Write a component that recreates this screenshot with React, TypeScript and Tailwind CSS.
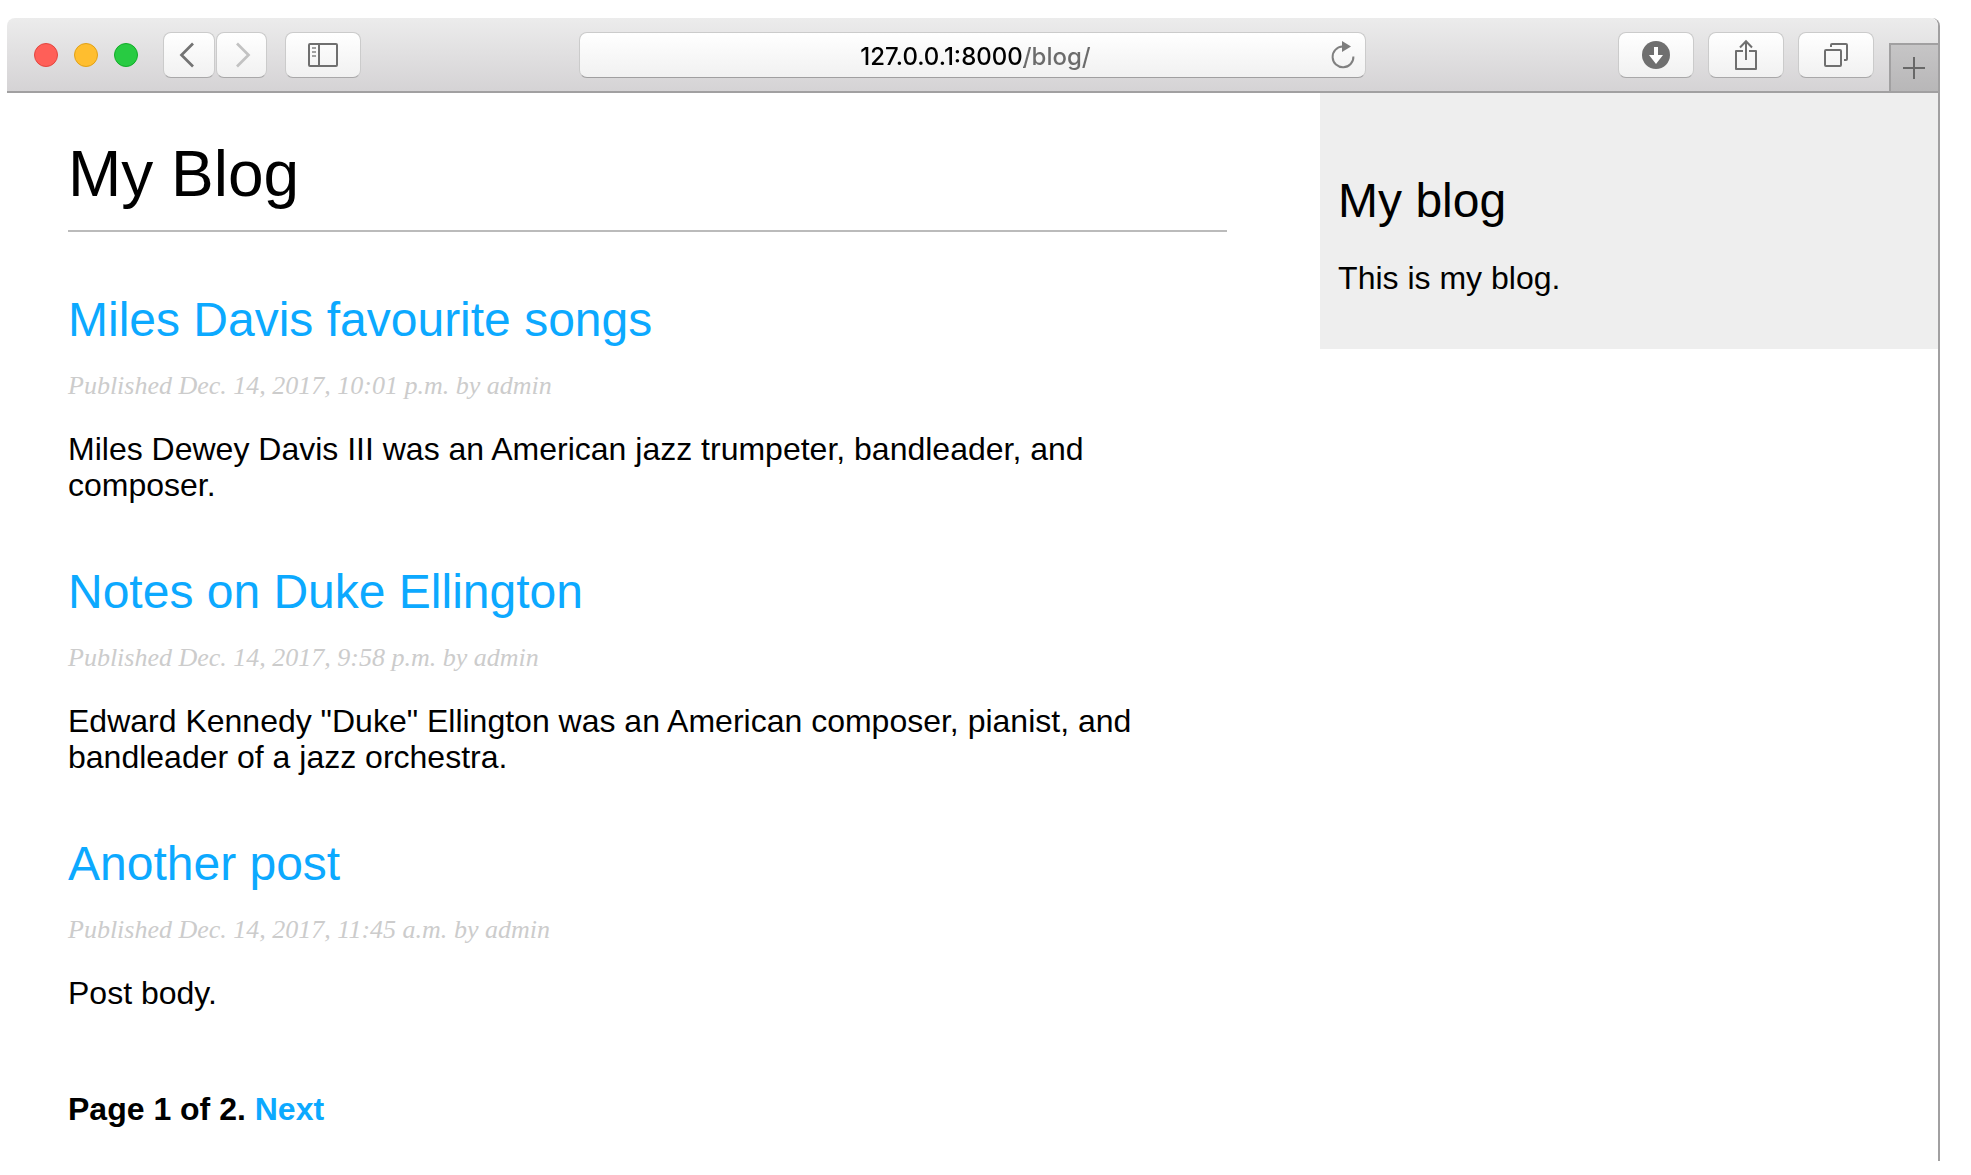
import React from "react";

type Post = { title: string; date: string; body: string };

const posts: Post[] = [
  {
    title: "Miles Davis favourite songs",
    date: "Dec. 14, 2017, 10:01 p.m.",
    body: "Miles Dewey Davis III was an American jazz trumpeter, bandleader, and composer.",
  },
  {
    title: "Notes on Duke Ellington",
    date: "Dec. 14, 2017, 9:58 p.m.",
    body: 'Edward Kennedy "Duke" Ellington was an American composer, pianist, and bandleader of a jazz orchestra.',
  },
  { title: "Another post", date: "Dec. 14, 2017, 11:45 a.m.", body: "Post body." },
];

function ToolButton({ label, size, children }: { label: string; size: string; children: React.ReactNode }) {
  return (
    <button
      type="button"
      aria-label={label}
      className={`${size} flex h-[46px] shrink-0 items-center justify-center rounded-lg border border-[#cbcbcb] border-b-[#a9a8a9] bg-linear-to-b from-white to-[#f1f1f1]`}
    >
      {children}
    </button>
  );
}

function Toolbar() {
  return (
    <header className="flex h-[75px] items-stretch rounded-t-lg border-b-2 border-[#a1a0a1] bg-linear-to-b from-[#ececec] to-[#d5d3d5]">
      <div className="flex flex-1 items-center">
        <div className="ml-[27px] flex gap-4">
          <button type="button" aria-label="Close" className="size-6 rounded-full border border-[#e2463f] bg-[#ff5f58]" />
          <button type="button" aria-label="Minimise" className="size-6 rounded-full border border-[#e1a116] bg-[#ffbe2f]" />
          <button type="button" aria-label="Zoom" className="size-6 rounded-full border border-[#12ac28] bg-[#28cb42]" />
        </div>
        <div className="ml-[25px] flex gap-px">
          <ToolButton label="Back" size="w-[52px] pr-1">
            <svg width="16" height="26" viewBox="0 0 16 26" fill="none" stroke="#737373" strokeWidth="2.7">
              <path d="M14 1.5 2.5 13 14 24.5" />
            </svg>
          </ToolButton>
          <ToolButton label="Forward" size="w-[51px] pl-[3px]">
            <svg width="16" height="26" viewBox="0 0 16 26" fill="none" stroke="#c2c2c2" strokeWidth="2.7">
              <path d="M2 1.5 13.5 13 2 24.5" />
            </svg>
          </ToolButton>
        </div>
        <div className="ml-[18px] flex">
          <ToolButton label="Show sidebar" size="w-[76px]">
            <svg width="30" height="24" viewBox="0 0 30 24" fill="none" stroke="#6f6f6f" strokeWidth="2">
              <rect x="1" y="1" width="28" height="22" rx="1" />
              <path d="M11 1v22" />
              <path d="M4 5h4M4 9h4M4 13h4" stroke="#a0a0a0" />
            </svg>
          </ToolButton>
        </div>
      </div>

      <div className="flex w-[40.8%] items-center">
        <div className="flex h-[46px] w-full items-center rounded-lg border border-[#cbcbcb] border-b-[#a09fa0] bg-linear-to-b from-white to-[#f1f1f1] pr-[10px] pl-10">
          <input
            type="text"
            aria-label="Address"
            defaultValue="127.0.0.1:8000/blog/"
            className="h-10 min-w-0 flex-1 bg-[linear-gradient(to_right,#000_calc(50%_+_49px),#6b6b6b_calc(50%_+_49px))] bg-clip-text pt-1 text-center font-['Inter',sans-serif] text-2xl font-medium text-transparent caret-black outline-none"
          />
          <button type="button" aria-label="Reload" className="shrink-0">
            <svg width="24" height="28" viewBox="0 0 24 28" fill="none">
              <path d="M11.5 5.5A10.4 10.4 0 1 0 22.4 15.5" stroke="#808080" strokeWidth="2" />
              <path d="M11 0 20 5.500 11 11Z" fill="#7d7d7d" />
            </svg>
          </button>
        </div>
      </div>

      <div className="flex flex-1 justify-end">
        <div className="flex items-center gap-[14px]">
          <ToolButton label="Downloads" size="w-[76px]">
            <svg width="28" height="28" viewBox="0 0 28 28">
              <circle cx="14" cy="14" r="14" fill="#6f6f6f" />
              <path d="M12 6h4v8h5l-7 9-7-9h5Z" fill="#fff" />
            </svg>
          </ToolButton>
          <ToolButton label="Share" size="w-[76px]">
            <svg width="22" height="34" viewBox="0 0 22 34" fill="none" stroke="#6f6f6f" strokeWidth="2">
              <path d="M8 13H1v18h20V13h-7" strokeLinejoin="round" />
              <path d="M11 22V3M5 9.500 11 3.200 17 9.500" />
            </svg>
          </ToolButton>
          <ToolButton label="Show all tabs" size="w-[76px]">
            <svg width="24" height="24" viewBox="0 0 24 24" fill="none" stroke="#6f6f6f" strokeWidth="2">
              <rect x="1" y="7" width="16" height="16" rx="1" />
              <path d="M7 4V2q0-1 1-1h14q1 0 1 1v14q0 1-1 1h-2" />
            </svg>
          </ToolButton>
        </div>
        <button
          type="button"
          aria-label="New tab"
          className="ml-[15px] flex w-[49px] items-center justify-center self-end border-t-2 border-l-2 border-[#a1a0a1] bg-linear-to-b from-[#c6c5c6] to-[#b8b7b8] py-3 pr-[2px]"
        >
          <svg width="22" height="22" viewBox="0 0 22 22" stroke="#686868" strokeWidth="2">
            <path d="M11 0v22M0 11h22" />
          </svg>
        </button>
      </div>
    </header>
  );
}

function PostItem({ post }: { post: Post }) {
  return (
    <article>
      <h2 className="text-5xl leading-[56px]">
        <a href="#" className="text-[#0ca9ff]">{post.title}</a>
      </h2>
      <p className="mt-6 font-['Liberation_Serif',serif] text-[26px] leading-7 text-[#ccc] italic">
        Published {post.date} by admin
      </p>
      <p className="mt-[31px]">{post.body}</p>
    </article>
  );
}

export default function App() {
  return (
    <div className="bg-white pt-[18px] pr-[31px] pb-[14px] pl-[7px] font-['Liberation_Sans',Arial,sans-serif] text-[32px] leading-9 text-black">
      <div className="rounded-tr-lg border-r-2 border-[#a1a0a1]">
        <Toolbar />
        <div className="flex items-start justify-between">
          <main className="ml-[61px] w-[60%] pt-[45px] pb-[34px]">
            <h1 className="border-b-2 border-[#bbb] pb-5 text-[64px] leading-[72px]">My Blog</h1>
            <div className="mt-[60px] flex flex-col gap-[61px]">
              {posts.map((post) => (
                <PostItem key={post.title} post={post} />
              ))}
            </div>
            <nav aria-label="Pagination" className="mt-20 font-bold">
              Page 1 of 2. <a href="#" className="text-[#0ca9ff]">Next</a>
            </nav>
          </main>
          <aside className="w-[32%] bg-[#eee] px-[18px] pt-20 pb-[53px]">
            <h2 className="text-5xl leading-[56px]">My blog</h2>
            <p className="mt-[31px]">This is my blog.</p>
          </aside>
        </div>
      </div>
    </div>
  );
}
